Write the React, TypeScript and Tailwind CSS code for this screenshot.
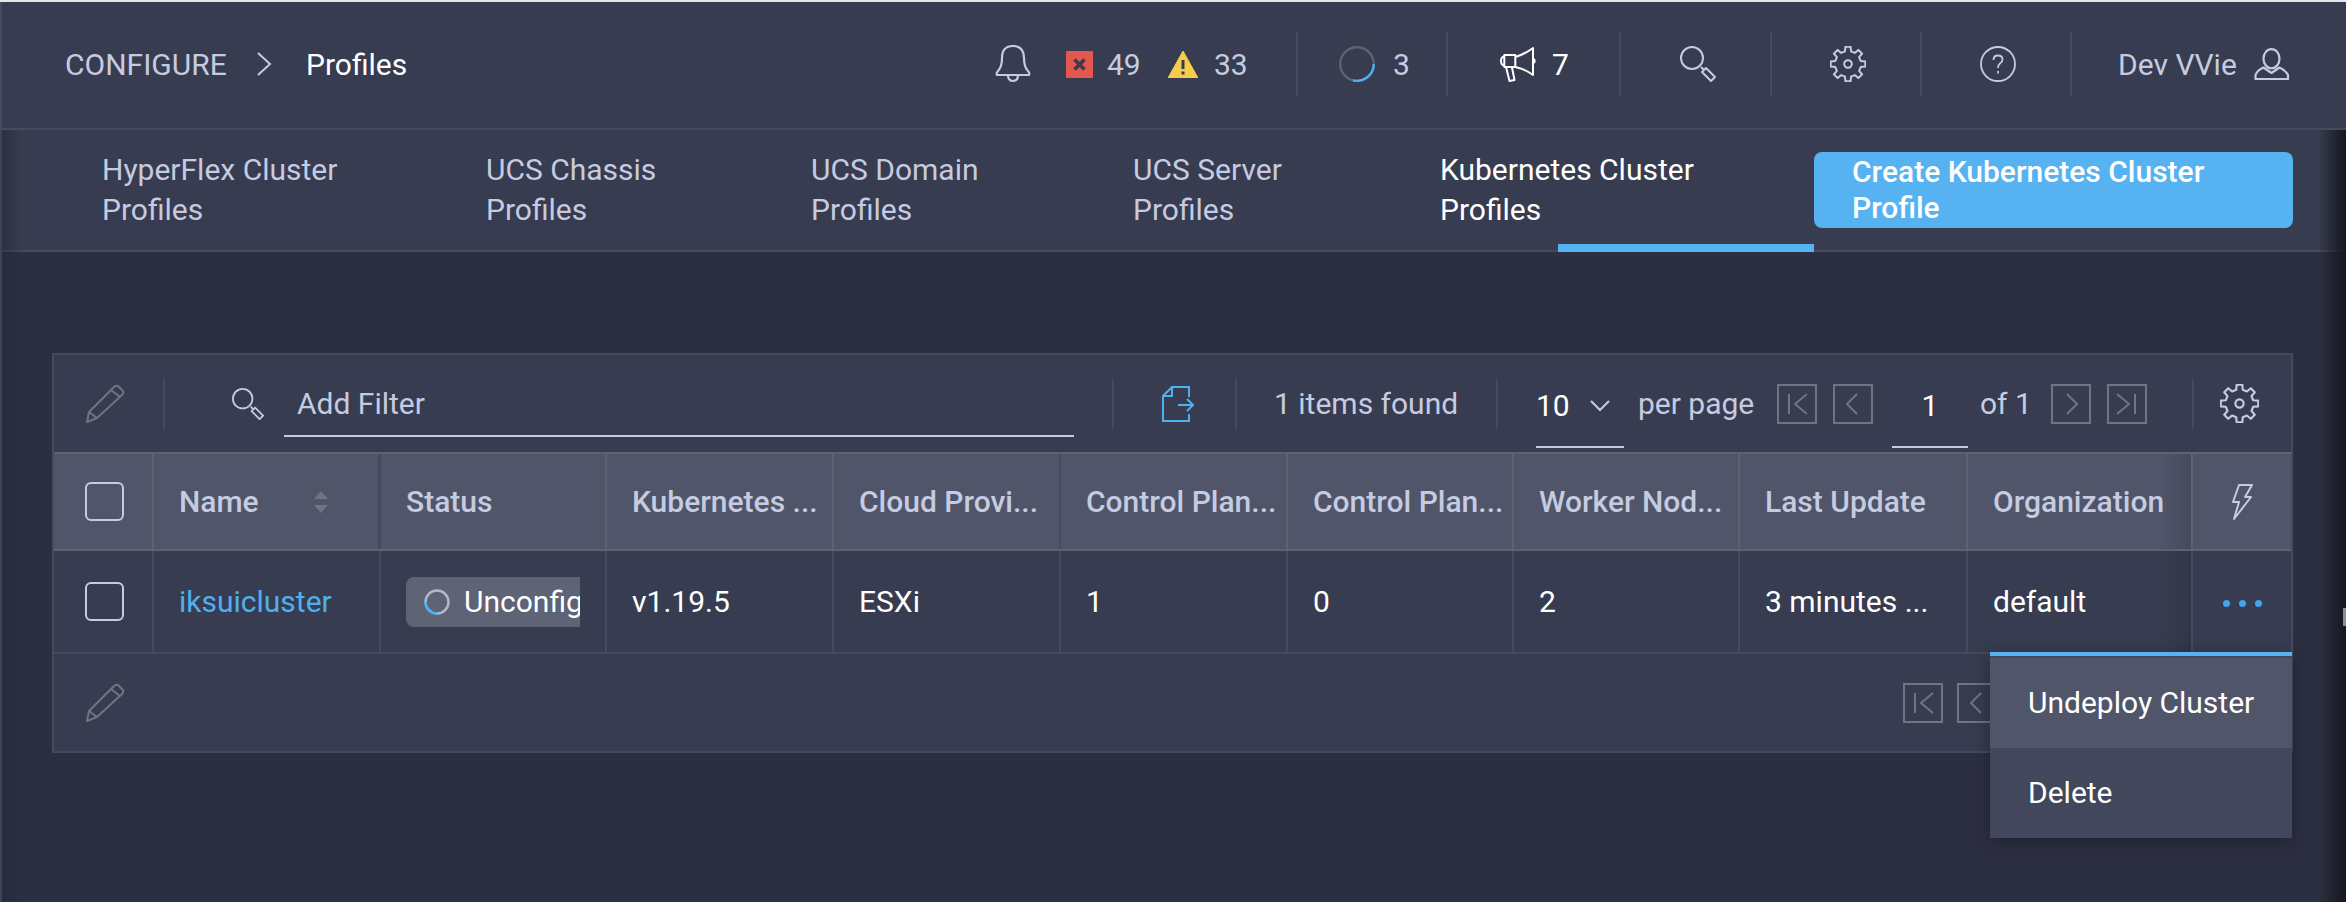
const gearPath = (cx: number, cy: number, rOut: number, rIn: number, teeth: number) => {
  const pts: string[] = [];
  for (let i = 0; i < teeth; i++) {
    const a = (i / teeth) * Math.PI * 2 - Math.PI / 2;
    const step = (Math.PI * 2) / teeth;
    const offs: [number, number][] = [
      [-0.3, rIn],
      [-0.19, rOut],
      [0.19, rOut],
      [0.3, rIn],
    ];
    offs.forEach(([o, r]) => {
      const t = a + o * step;
      pts.push(`${(cx + r * Math.cos(t)).toFixed(2)} ${(cy + r * Math.sin(t)).toFixed(2)}`);
    });
  }
  return `M${pts.join('L')}Z`;
};

const Gear = ({ className }: { className: string }) => (
  <svg viewBox="0 0 36 36" className={className} fill="none" stroke="#c5cbe0" strokeWidth="2" strokeLinejoin="round">
    <path d={gearPath(18, 18, 17.5, 13, 8)} />
    <circle cx="18" cy="18" r="3.8" />
  </svg>
);

const Pencil = () => (
  <svg viewBox="0 0 40 40" className="w-10 h-10" fill="none" stroke="#6f7486" strokeWidth="2" strokeLinejoin="round">
    <path d="M2 38 L4 28 L29 3 Q31 1 33 2 L38 7 Q39 9 37 11 L12 34 Z" />
    <path d="M4 28 L12 34 M26 6 L35 13" />
  </svg>
);

const SearchIcon = ({ className }: { className: string }) => (
  <svg viewBox="0 0 36 36" className={className} fill="none" stroke="#c5cbe0" strokeWidth="2">
    <circle cx="12" cy="12" r="11" />
    <path d="M21 21 L24 24 M22 26 L26 22 L35 31 L31 35 Z" strokeLinejoin="round" />
  </svg>
);

const PagerBtn = ({ d, bar }: { d: string; bar?: number }) => (
  <svg viewBox="0 0 40 40" className="w-10 h-10 shrink-0" fill="none" stroke="#6f7486" strokeWidth="2">
    <rect x="1" y="1" width="38" height="38" />
    <path d={d} />
    {bar ? <path d={`M${bar} 10 V30`} /> : null}
  </svg>
);

const Checkbox = () => <div className="w-[39px] h-[39px] rounded-md border-2 border-[#c5cbe0]" />;

const Divider = () => <div className="w-0.5 h-[50px] bg-[#454a5e] shrink-0" />;

const HeadDivider = () => <div className="w-0.5 h-16 bg-[#454a5e] shrink-0" />;

const tabs = [
  { w: 'w-[384px]', a: 'HyperFlex Cluster', b: 'Profiles' },
  { w: 'w-[325px]', a: 'UCS Chassis', b: 'Profiles' },
  { w: 'w-[322px]', a: 'UCS Domain', b: 'Profiles' },
  { w: 'w-[307px]', a: 'UCS Server', b: 'Profiles' },
];

const gridCols = 'grid grid-cols-[100px_227px_226px_227px_227px_227px_226px_226px_228px_225px_1fr]';

const heads = ['Kubernetes ...', 'Cloud Provi...', 'Control Plan...', 'Control Plan...', 'Worker Nod...', 'Last Update', 'Organization'];
const vals = ['v1.19.5', 'ESXi', '1', '0', '2', '3 minutes ...', 'default'];

export default function App() {
  return (
    <div className="relative w-[2346px] h-[902px] overflow-hidden bg-[#2c2f40] font-['Roboto',sans-serif] text-[30px] text-[#c5cbe0]">
      <div className="h-0.5 bg-[#e6e6ea]" />

      {/* Top bar */}
      <header className="h-[128px] bg-[#383c50] border-b-2 border-b-[#454a5e] border-l-2 border-l-[#454a5e] flex items-center pl-[63px] pb-0.5">
        <span className="w-[192px]">CONFIGURE</span>
        <svg viewBox="0 0 16 24" className="w-4 h-6 -ml-[1px]" fill="none" stroke="#c5cbe0" strokeWidth="2">
          <path d="M2 1 L14 12 L2 23" />
        </svg>
        <span className="ml-[34px] w-[689px] text-white">Profiles</span>

        <div className="flex items-center">
          <svg viewBox="0 0 36 38" className="w-9 h-[38px] mr-[35px]" fill="none" stroke="#c5cbe0" strokeWidth="2.2" strokeLinejoin="round">
            <path d="M2 30 Q1 28 3 26 Q7 22 7 13 Q7 1 18 1 Q29 1 29 13 Q29 22 33 26 Q35 28 34 30 Z" />
            <path d="M13 30 Q13 36 18 36 Q23 36 23 30" />
          </svg>
          <div className="relative w-[27px] h-[27px] bg-[#e2574f] rounded-[1px]">
            <svg viewBox="0 0 27 27" className="absolute inset-0" stroke="#383c50" strokeWidth="3.6" fill="none">
              <path d="M8.5 8.5 L18.5 18.5 M18.5 8.5 L8.5 18.5" />
            </svg>
          </div>
          <span className="ml-[14px] w-[61px]">49</span>
          <svg viewBox="0 0 30 27" className="w-[30px] h-[27px]">
            <path d="M15 0 L30 27 L0 27 Z" fill="#f8cc4b" stroke="#f8cc4b" strokeLinejoin="round" />
            <path d="M15 9 V18 M15 20.5 V23.5" stroke="#383c50" strokeWidth="3" />
          </svg>
          <span className="ml-[16px] w-[82px]">33</span>
          <HeadDivider />
          <div className="w-[148px] flex items-center pl-[41px]">
            <svg viewBox="0 0 36 36" className="w-9 h-9" fill="none" strokeWidth="2.4">
              <circle cx="18" cy="18" r="16.8" stroke="#5d6275" />
              <path d="M34.8 18 A16.8 16.8 0 0 1 14 34.3" stroke="#4fb0ee" />
            </svg>
            <span className="ml-[18px]">3</span>
          </div>
          <HeadDivider />
          <div className="w-[171px] flex items-center pl-[52px] text-white">
            <svg viewBox="0 0 37 35" className="w-[37px] h-[35px]" fill="none" stroke="#ffffff" strokeWidth="2" strokeLinejoin="round">
              <rect x="4.3" y="8" width="11" height="12" />
              <path d="M15.3 10 Q25 7 33 1 V28 Q25 22 15.3 20" />
              <path d="M4.3 9.5 Q1 10 1 14 Q1 18 4.3 18.5" />
              <path d="M33 11.5 Q36.5 14 33 16.5" />
              <path d="M6 20 L9.5 34 L14.5 33 L12 20.5" />
            </svg>
            <span className="ml-[15px]">7</span>
          </div>
          <HeadDivider />
          <div className="w-[149px] flex pl-[59px]">
            <SearchIcon className="w-9 h-9" />
          </div>
          <HeadDivider />
          <div className="w-[148px] flex pl-[58px]">
            <Gear className="w-9 h-9" />
          </div>
          <HeadDivider />
          <div className="w-[148px] flex pl-[58px]">
            <svg viewBox="0 0 36 36" className="w-9 h-9" fill="none" stroke="#c5cbe0" strokeWidth="1.8">
              <circle cx="18" cy="18" r="17" />
              <path d="M13.5 14 Q13.5 9.5 18 9.5 Q22.5 9.5 22.5 13.5 Q22.5 16 20 17.5 Q18 19 18 22" />
              <path d="M18 25 V27.5" />
            </svg>
          </div>
          <HeadDivider />
          <div className="flex items-center pl-[46px]">
            <span className="w-[136px] whitespace-nowrap">Dev VVie</span>
            <svg viewBox="0 0 36 32" className="w-9 h-8" fill="none" stroke="#c5cbe0" strokeWidth="2.2" strokeLinejoin="round">
              <ellipse cx="17.5" cy="10.7" rx="8" ry="9.6" />
              <path d="M9.5 19.5 Q3 22.5 1.5 27 V31 H34 V27 Q32 22.5 25.5 19.5 L17.5 25 Z" />
            </svg>
          </div>
        </div>
      </header>

      {/* Tabs */}
      <nav className="relative h-[122px] bg-[#383c50] border-b-2 border-b-[#454a5e] flex items-center pl-[102px] leading-10">
        {tabs.map((t) => (
          <div key={t.a} className={t.w}>
            {t.a}
            <br />
            {t.b}
          </div>
        ))}
        <div className="w-[374px] text-white">
          Kubernetes Cluster
          <br />
          Profiles
        </div>
        <button className="w-[479px] h-[76px] bg-[#56b2f0] rounded-lg pl-[38px] text-left text-white font-medium leading-9">
          Create Kubernetes Cluster
          <br />
          Profile
        </button>
        <div className="absolute left-[1558px] bottom-[-2px] w-[256px] h-2 bg-[#56b2f0]" />
      </nav>

      {/* Content */}
      <main className="pt-[101px] pl-[52px] pr-[53px]">
        <div className="relative h-[400px] bg-[#383c50] border-2 border-[#454a5e]">
          {/* Toolbar */}
          <div className="h-[97px] flex items-center pl-[31px]">
            <Pencil />
            <div className="ml-[38px] mr-[67px]"><Divider /></div>
            <SearchIcon className="w-8 h-8" />
            <div className="ml-[20px] w-[790px] h-[64px] -mb-[3px] border-b-2 border-[#c5cbe0] flex items-center pl-[13px] pb-0.5">Add Filter</div>
            <div className="ml-[38px] mr-[48px]"><Divider /></div>
            <svg viewBox="0 0 32 38" className="w-8 h-[38px]" fill="none" stroke="#4fb0ee" strokeWidth="2">
              <path d="M27 12 V2 H10 L1 11 V36 H27 V29" />
              <path d="M10 2 V11 H1 M16 20 H31 M25 14 L31 20 L25 26" />
            </svg>
            <div className="ml-[41px]"><Divider /></div>
            <span className="ml-[37px] w-[222px] whitespace-nowrap">1 items found</span>
            <Divider />
            <div className="ml-[38px] w-[88px] h-[72px] -mb-[17px] border-b-2 border-[#c5cbe0] flex items-start pt-[11px] text-white leading-[38px]">
              <span>10</span>
              <svg viewBox="0 0 20 12" className="w-5 h-3 ml-[20px] mt-[13px]" fill="none" stroke="#c5cbe0" strokeWidth="2">
                <path d="M1 1 L10 10 L19 1" />
              </svg>
            </div>
            <span className="ml-[14px] w-[139px] whitespace-nowrap">per page</span>
            <PagerBtn d="M30 10 L18 20 L30 30" bar={12} />
            <div className="ml-4"><PagerBtn d="M24 10 L14 20 L24 30" /></div>
            <div className="ml-[19px] w-[76px] h-[72px] -mb-[17px] border-b-2 border-[#c5cbe0] pt-[11px] text-center text-white leading-[38px]">1</div>
            <span className="ml-3 w-[71px] whitespace-nowrap">of 1</span>
            <PagerBtn d="M16 10 L26 20 L16 30" />
            <div className="ml-4"><PagerBtn d="M10 10 L22 20 L10 30" bar={28} /></div>
            <div className="ml-[45px] mr-[26px]"><Divider /></div>
            <Gear className="w-[39px] h-[39px]" />
          </div>

          {/* Head row */}
          <div className={`${gridCols} h-[99px] bg-[#50556a] border-y-2 border-[#5d6275] font-medium`}>
            <div className="flex items-center pl-[31px] border-r-2 border-[#5d6275]"><Checkbox /></div>
            <div className="flex items-center pl-[25px] border-r-[3px] border-[#454a5e]">
              <span className="w-[134px]">Name</span>
              <svg viewBox="0 0 16 22" className="w-4 h-[22px]">
                <path d="M8 0 L15 8 H1 Z M1 14 H15 L8 22 Z" fill="#6f7486" />
              </svg>
            </div>
            <div className="flex items-center pl-[25px] border-r-2 border-[#5d6275]">Status</div>
            {heads.map((h, i) => (
              <div
                key={h + i}
                className={`flex items-center pl-[25px] whitespace-nowrap overflow-hidden border-r-2 ${
                  i === 1 ? 'border-[#454a5e]' : 'border-[#5d6275]'
                }`}
              >
                {h}
              </div>
            ))}
            <div className="relative flex items-center justify-center">
              <div className="absolute -left-[32px] top-0 bottom-0 w-[30px] bg-linear-to-r from-[#50556a00] to-[#3a3e5080]" />
              <svg viewBox="0 0 22 36" className="w-[22px] h-9" fill="none" stroke="#c5cbe0" strokeWidth="2" strokeLinejoin="round">
                <path d="M8 1 H21 L14 13 H20 L3 35 L8 18 H2 Z" />
              </svg>
            </div>
          </div>

          {/* Data row */}
          <div className={`${gridCols} h-[103px] border-b-2 border-[#454a5e] text-white`}>
            <div className="flex items-center pl-[31px] border-r-2 border-[#454a5e]"><Checkbox /></div>
            <div className="flex items-center pl-[25px] border-r-2 border-[#454a5e] text-[#4fb0ee]">iksuicluster</div>
            <div className="flex items-center pl-[25px] border-r-2 border-[#454a5e]">
              <div className="w-[174px] h-[50px] bg-[#5e6376] rounded-l-lg flex items-center pl-[18px] overflow-hidden whitespace-nowrap">
                <svg viewBox="0 0 26 26" className="w-[26px] h-[26px] shrink-0" fill="none" strokeWidth="2.4">
                  <circle cx="13" cy="13" r="11.5" stroke="#b3b9cd" />
                  <path d="M1.5 13 A11.5 11.5 0 0 0 13 24.5" stroke="#4fb0ee" />
                </svg>
                <span className="ml-[14px]">Unconfig</span>
              </div>
            </div>
            {vals.map((v) => (
              <div key={v} className="flex items-center pl-[25px] whitespace-nowrap border-r-2 border-[#454a5e]">{v}</div>
            ))}
            <div className="relative flex items-center justify-center gap-[9px] pt-[4px]">
              <div className="absolute -left-[32px] top-0 bottom-0 w-[30px] bg-linear-to-r from-[#383c5000] to-[#2c2f4080]" />
              <span className="w-[7px] h-[7px] rounded-full bg-[#41a5ee]" />
              <span className="w-[7px] h-[7px] rounded-full bg-[#41a5ee]" />
              <span className="w-[7px] h-[7px] rounded-full bg-[#41a5ee]" />
            </div>
          </div>

          {/* Footer row */}
          <div className="h-[97px] flex items-center pl-[31px]">
            <Pencil />
            <div className="ml-[1778px] flex gap-[14px]">
              <PagerBtn d="M30 10 L18 20 L30 30" bar={12} />
              <PagerBtn d="M24 10 L14 20 L24 30" />
            </div>
          </div>

          {/* Row action menu */}
          <div className="absolute right-[-1px] top-[297px] w-[302px] bg-[#43475b] text-white shadow-[0_4px_16px_rgba(20,22,32,0.5)]">
            <div className="h-1 bg-[#56b2f0]" />
            <div className="h-0.5 bg-[#43475b]" />
            <div className="h-[90px] bg-[#50556a] flex items-center pl-[38px] pb-0.5">Undeploy Cluster</div>
            <div className="h-[90px] flex items-center pl-[38px] pb-0.5">Delete</div>
          </div>
        </div>
      </main>

      {/* Edge shadows of the neighbouring panels */}
      <div className="absolute left-0 top-[130px] bottom-0 w-0.5 bg-[#3f4356]" />
      <div className="absolute left-0.5 top-[130px] bottom-0 w-5 bg-linear-to-r from-[#23263480] to-[#23263400]" />
      <div className="absolute right-0 top-[130px] bottom-0 w-7 bg-linear-to-r from-[#2c2f4000] to-[#15171f]" />
      <div className="absolute right-0 top-[608px] w-[3px] h-[18px] bg-[#8a8d96]" />
    </div>
  );
}
